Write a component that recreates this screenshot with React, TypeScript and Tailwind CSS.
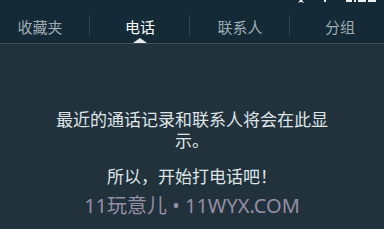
import React from "react";

const font = '"Noto Sans CJK SC", "Noto Sans", sans-serif';

export default function App() {
  const tabs = ["收藏夹", "电话", "联系人", "分组"];
  return (
    <div className="w-[384px] h-[229px] overflow-hidden bg-[#21323c] flex flex-col" style={{ fontFamily: font }}>
      <div className="bg-[#142a37] h-[43px] relative flex flex-col">
        <div className="h-[4px] flex justify-end pr-[4px]">
          <svg width="90" height="4" viewBox="0 0 90 4">
            <path d="M10 0 L12 0 L14 3 L11 1.8 L8 3 Z" fill="#e8eef1" />
            <rect x="34" y="0" width="2" height="2" fill="#e8eef1" />
            <rect x="56" y="0" width="6" height="2" fill="#e8eef1" />
            <rect x="64" y="0" width="2" height="2" fill="#e8eef1" />
            <rect x="68" y="0" width="8" height="2" fill="#e8eef1" />
            <rect x="78" y="0" width="8" height="2" fill="#e8eef1" />
          </svg>
        </div>
        <div className="flex -ml-[10px] w-[400px] flex-1">
          {tabs.map((t, i) => (
            <div key={t} className="w-[100px] flex items-center justify-center relative">
              <span className={`relative top-[3px] text-[15px] leading-[18px] ${i === 1 ? "text-white" : "text-[#9fabb2]"}`}>{t}</span>
              {i < 3 && <div className="absolute right-0 top-[11px] h-[21px] w-px bg-[#34464f]" />}
              {i === 1 && (
                <div className="absolute left-1/2 -translate-x-1/2 bottom-0 w-0 h-0 border-l-[7px] border-r-[7px] border-b-[5px] border-l-transparent border-r-transparent border-b-[#e6ebee]" />
              )}
            </div>
          ))}
        </div>
      </div>
      <div className="h-[1px] bg-[#3a4c56]" />
      <div className="flex flex-col items-center pt-[64px]">
        <div className="w-[282px] text-center text-[17px] leading-[21px] text-[#dfe4e7]">
          最近的通话记录和联系人将会在此显示。
        </div>
        <div className="mt-[15px] text-[17px] leading-[21px] text-[#dfe4e7]">所以，开始打电话吧！</div>
        <div
          className="mt-[8px] text-[20px] leading-[24px] text-[#958ea5]"
          style={{ fontFamily: '"Noto Sans", "Noto Sans CJK SC", sans-serif' }}
        >
          11玩意儿 • 11WYX.COM
        </div>
      </div>
    </div>
  );
}
